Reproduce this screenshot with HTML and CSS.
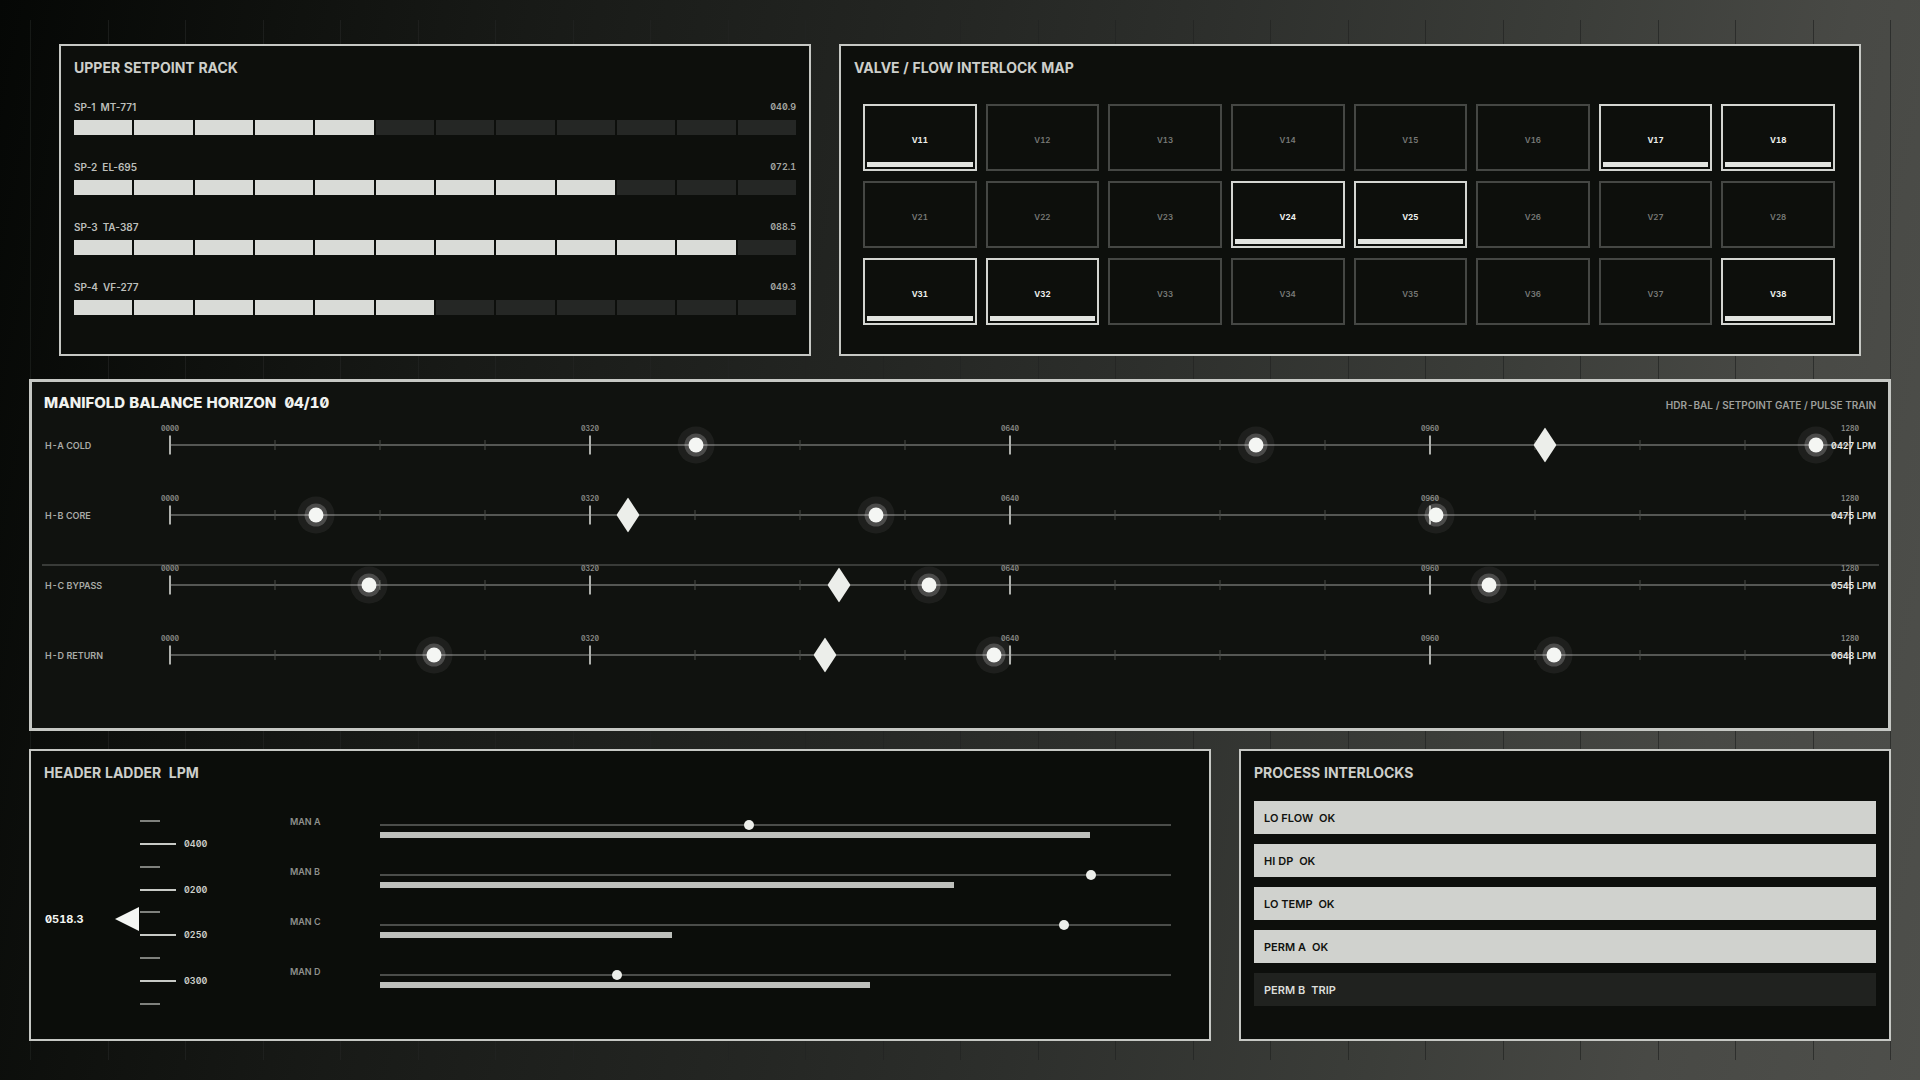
FILE: index.html
```html
<!DOCTYPE html>
<html lang="en">
<head>
<meta charset="utf-8">
<title>Manifold Balance Horizon</title>
<link rel="stylesheet" href="styles.css">
</head>
<body>
<div class="backdrop" aria-hidden="true"><i></i><i></i><i></i><i></i><i></i><i></i><i></i><i></i><i></i><i></i><i></i><i></i><i></i><i></i><i></i><i></i><i></i><i></i><i></i><i></i><i></i><i></i><i></i><i></i></div>
<main class="board">
  <div class="row row-upper">
    <section class="panel">
      <h2 class="title">UPPER SETPOINT RACK</h2>
      <div class="rack" id="rack"></div>
    </section>
    <section class="panel">
      <h2 class="title">VALVE / FLOW INTERLOCK MAP</h2>
      <ul class="valves" id="valves"></ul>
    </section>
  </div>

  <section class="panel horizon">
    <header class="horizon-head">
      <h1 class="title title-main">MANIFOLD BALANCE HORIZON  04/10</h1>
      <p class="subtitle">HDR-BAL / SETPOINT GATE / PULSE TRAIN</p>
    </header>
    <div id="lanes"></div>
  </section>

  <div class="row row-lower">
    <section class="panel panel-deep">
      <h2 class="title">HEADER LADDER  LPM</h2>
      <div class="ladder">
        <div class="reading"><strong>0518.3</strong>
          <svg class="pointer" viewBox="0 0 24 24" aria-hidden="true"><path d="M0 12 24 0v24z"/></svg>
        </div>
        <ol class="scale">
          <li></li>
          <li class="major">0400</li>
          <li></li>
          <li class="major">0200</li>
          <li></li>
          <li class="major">0250</li>
          <li></li>
          <li class="major">0300</li>
          <li></li>
        </ol>
        <div class="manifolds" id="manifolds"></div>
      </div>
    </section>
    <section class="panel">
      <h2 class="title">PROCESS INTERLOCKS</h2>
      <ul class="interlocks">
        <li>LO FLOW  OK</li>
        <li>HI DP  OK</li>
        <li>LO TEMP  OK</li>
        <li>PERM A  OK</li>
        <li class="trip">PERM B  TRIP</li>
      </ul>
    </section>
  </div>
</main>
<script src="board.js"></script>
</body>
</html>
```
FILE: styles.css
```css
* { box-sizing: border-box; }

body {
  margin: 0;
  min-height: 100vh;
  position: relative;
  background: linear-gradient(101deg, #050705 0%, #0f110e 13%, #181a17 25%, #252724 46%, #2d2f2c 57%, #3b3d39 74%, #484945 87%, #4e4f4b 100%);
  color: #cdcfcb;
  font: 600 9px/12px Inter, "Liberation Sans", sans-serif;
  font-feature-settings: "zero", "tnum";
}

h1, h2, p, ul, ol { margin: 0; padding: 0; }
ul, ol { list-style: none; }

/* faint vertical rules behind the panels */
.backdrop {
  position: absolute;
  inset: 20px 29px 20px 30px;
  display: flex;
  border-left: 1px solid rgba(34, 36, 34, .6);
}
.backdrop i { flex: 1; border-right: 1px solid rgba(34, 36, 34, .7); }

.board {
  position: relative;
  display: flex;
  flex-direction: column;
  padding: 44px 29px 39px;
}

.row { display: grid; gap: 28px; }
.row-upper { grid-template-columns: 752fr 1022fr; margin: 0 30px 23px; }
.row-lower { grid-template-columns: 1182fr 652fr; margin-top: 18px; }

.panel {
  border: 2px solid #c6c8c4;
  background: #0d0f0c;
  padding: 13px 13px 12px;
}
.panel-deep { background: #0b0d0a; }

.title {
  font-size: 14px;
  line-height: 18px;
  font-weight: 700;
  white-space: pre;
}

/* setpoint rack */
.rack { display: grid; gap: 26px; padding: 24px 0 27px; }
.setpoint { display: grid; gap: 7px; }
.setpoint-head { display: flex; justify-content: space-between; color: #a5a7a3; }
.setpoint-name { font-size: 10px; color: #bdbfbb; font-feature-settings: normal; white-space: pre; }
.segments { display: flex; gap: 2px; height: 15px; }
.segments i { flex: 1; background: #252725; }
.segments .on { background: #d9dbd7; }

/* valve map */
.valves {
  display: grid;
  grid-template-columns: repeat(8, 1fr);
  gap: 10px 9px;
  padding: 27px 11px 17px 9px;
}
.valves li {
  display: flex;
  flex-direction: column;
  justify-content: space-between;
  height: 67px;
  padding: 28px 2px 2px;
  border: 2px solid #454744;
  color: #7a7c79;
  font-size: 8px;
  text-align: center;
}
.valves .open { border-color: #d3d5d1; color: #eef0ed; font-weight: 700; }
.valves .open::after { content: ""; height: 5px; background: #e2e4e0; }

/* balance horizon */
.horizon { border-width: 3px; background: #10120f; padding: 13px 12px 38px; }
.horizon-head { display: flex; justify-content: space-between; align-items: center; height: 15px; }
.title-main { font-size: 15px; font-weight: 800; color: #f0f2ef; }
.subtitle { font-size: 10px; color: #9d9f9b; padding-top: 4px; }

.lane {
  position: relative;
  display: grid;
  grid-template-columns: 126px 1fr;
  align-items: center;
  height: 70px;
  padding-right: 26px;
}
.lane-name { color: #a9aba7; padding: 2px 0 0 1px; }
.lane-value { position: absolute; right: 0; top: 30px; color: #e8eae6; }
.lane.split::before {
  content: "";
  position: absolute;
  inset: 14px -3px auto -2px;
  height: 2px;
  background: #393b38;
}
.track { position: relative; height: 2px; background: #555754; }
.track > * { position: absolute; top: 1px; transform: translate(-50%, -50%); }
.tick { width: 1px; height: 10px; background: #4a4c49; }
.tick.major { width: 2px; height: 19px; background: #aeb0ac; }
.track .tick-label { top: -15px; font-size: 7px; line-height: 8px; color: #8b8d89; }
.pulse {
  width: 15px;
  height: 15px;
  border-radius: 50%;
  background: #f4f6f3;
  box-shadow: 0 0 0 4px rgba(255, 255, 255, .2), 0 0 0 11px rgba(255, 255, 255, .06);
}
.gate { width: 23px; height: 35px; fill: #eceeea; }

/* header ladder */
.ladder {
  display: grid;
  grid-template-columns: 96px 150px 1fr;
  align-items: start;
  padding: 28px 25px 12px 0;
}
.reading { display: flex; justify-content: space-between; align-items: center; padding: 97px 1px 0; color: #f4f6f3; font-size: 11px; }
.reading strong { font-weight: 700; }
.pointer { width: 24px; height: 24px; fill: #f4f6f3; }
.scale { display: grid; grid-template-rows: repeat(9, 1fr); height: 205px; }
.scale li { display: flex; align-items: center; gap: 8px; color: #cdcfcb; }
.scale li::before { content: ""; width: 20px; height: 2px; background: #7f817d; }
.scale .major::before { width: 36px; background: #c8cac6; }
.manifolds { display: grid; gap: 28px; padding-top: 6px; }
.manifold { display: grid; grid-template-columns: 90px 1fr; height: 22px; color: #8f918d; }
.meter { padding-top: 8px; }
.meter-line { position: relative; height: 2px; background: #4b4d4a; }
.meter-dot {
  position: absolute;
  top: -4px;
  width: 10px;
  height: 10px;
  margin-left: -5px;
  border-radius: 50%;
  background: #eceeea;
}
.meter-bar { height: 6px; margin-top: 6px; background: #bdbfbb; }

/* interlocks */
.interlocks { display: grid; gap: 10px; padding: 19px 0 21px; }
.interlocks li {
  height: 33px;
  padding: 2px 10px 0;
  background: #d0d2ce;
  color: #10120f;
  font-size: 11px;
  line-height: 31px;
  white-space: pre;
}
.interlocks .trip { background: #20221f; color: #dcdeda; }
```
FILE: board.js
```js
const fill = (id, items, render) => {
  document.getElementById(id).innerHTML = items.map(render).join("");
};

fill("rack", [
  ["SP-1  MT-771", "040.9", 5],
  ["SP-2  EL-695", "072.1", 9],
  ["SP-3  TA-387", "088.5", 11],
  ["SP-4  VF-277", "049.3", 6]
], ([name, value, lit]) => `<div class="setpoint">
  <div class="setpoint-head"><span class="setpoint-name">${name}</span><span>${value}</span></div>
  <div class="segments">${Array.from({ length: 12 }, (_, i) => `<i${i < lit ? ' class="on"' : ""}></i>`).join("")}</div>
</div>`);

const open = ["V11", "V17", "V18", "V24", "V25", "V31", "V32", "V38"];
const valves = [1, 2, 3].flatMap(r => [1, 2, 3, 4, 5, 6, 7, 8].map(c => `V${r}${c}`));
fill("valves", valves, v => `<li${open.includes(v) ? ' class="open"' : ""}>${v}</li>`);

const ticks = Array.from({ length: 17 }, (_, i) => {
  const at = `style="left:${i * 6.25}%"`;
  if (i % 4) return `<i class="tick" ${at}></i>`;
  return `<i class="tick major" ${at}></i><span class="tick-label" ${at}>${String(i * 80).padStart(4, "0")}</span>`;
}).join("");

fill("lanes", [
  ["H-A COLD", "0427 LPM", 31.33, 81.83],
  ["H-B CORE", "0475 LPM", 8.71, 27.28],
  ["H-C BYPASS", "0545 LPM", 11.83, 39.8],
  ["H-D RETURN", "0648 LPM", 15.7, 39]
], ([name, value, pulse, gate], i) => `<div class="lane${i === 2 ? " split" : ""}">
  <span class="lane-name">${name}</span>
  <div class="track">${ticks}
    ${[0, 1, 2].map(n => `<i class="pulse" style="left:${pulse + n * 33.333}%"></i>`).join("")}
    <svg class="gate" style="left:${gate}%" viewBox="0 0 23 35" aria-hidden="true"><path d="M11.5 0 23 17.5 11.5 35 0 17.5z"/></svg>
  </div>
  <span class="lane-value">${value}</span>
</div>`);

fill("manifolds", [
  ["MAN A", 46.6, 89.7],
  ["MAN B", 89.9, 72.6],
  ["MAN C", 86.5, 36.9],
  ["MAN D", 30, 61.9]
], ([name, dot, bar]) => `<div class="manifold">
  <span>${name}</span>
  <div class="meter">
    <div class="meter-line"><i class="meter-dot" style="left:${dot}%"></i></div>
    <div class="meter-bar" style="width:${bar}%"></div>
  </div>
</div>`);
```
